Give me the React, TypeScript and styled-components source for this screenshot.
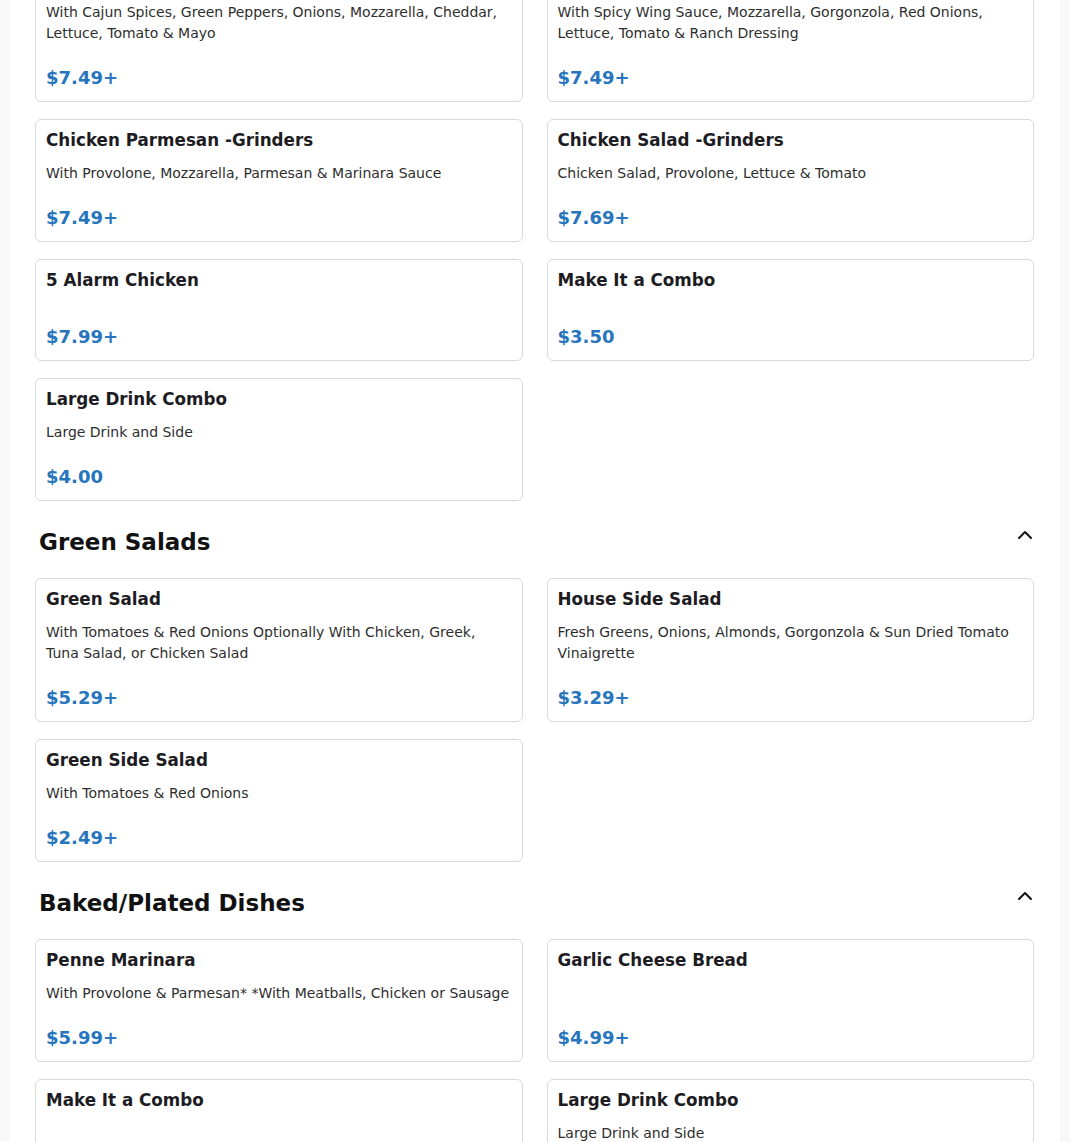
import styled, { createGlobalStyle } from 'styled-components';
import { ChevronUp } from 'lucide-react';

const GlobalStyle = createGlobalStyle`
  body {
    margin: 0;
    background-color: #f8f8f8;
    font-family: "DejaVu Sans", Verdana, sans-serif;
  }
`;

const Page = styled.div`
  max-width: 1050px;
  margin: 0 auto;
  background-color: #ffffff;
  min-height: 100vh;
  overflow: hidden;
`;

// the screenshot is scrolled part way into the menu
const Menu = styled.div`
  padding: 0 26px 0 25px;
  margin-top: -42px;
`;

const Section = styled.section`
  & + & {
    margin-top: 22px;
  }
`;

const SectionHeader = styled.div`
  display: flex;
  justify-content: space-between;
  align-items: flex-start;
  padding-left: 4px;
  margin-bottom: 22px;
`;

const SectionTitle = styled.h2`
  margin: 5px 0 0;
  font-size: 23px;
  line-height: 28px;
  font-weight: bold;
  color: #111111;
`;

const Toggle = styled.button`
  display: flex;
  align-items: center;
  justify-content: center;
  width: 24px;
  height: 24px;
  padding: 0;
  margin-right: -3px;
  border: none;
  background: transparent;
  color: #111111;
  cursor: pointer;
`;

const Grid = styled.div`
  display: grid;
  grid-template-columns: 1fr 1fr;
  column-gap: 24px;
  row-gap: 17px;
`;

const Card = styled.div`
  display: flex;
  flex-direction: column;
  padding: 10px 10px 12px;
  border: 1px solid #d9d9d9;
  border-radius: 6px;
  background-color: #ffffff;
`;

const ItemName = styled.h3`
  margin: 0;
  font-size: 16.75px;
  line-height: 20px;
  font-weight: bold;
  color: #1c1c22;
`;

const ItemDesc = styled.p`
  margin: 13px 0 23px;
  font-size: 14px;
  line-height: 21px;
  color: #2e2e2e;
`;

const Price = styled.div`
  margin-top: auto;
  font-size: 18px;
  line-height: 22px;
  font-weight: bold;
  color: #2675bd;
`;

interface Item {
  name: string;
  desc?: string;
  price: string;
}

interface MenuSection {
  title?: string;
  items: Item[];
}

const sections: MenuSection[] = [
  {
    items: [
      {
        name: 'Cajun Chicken -Grinders',
        desc: 'With Cajun Spices, Green Peppers, Onions, Mozzarella, Cheddar, Lettuce, Tomato & Mayo',
        price: '$7.49+',
      },
      {
        name: 'Buffalo Chicken -Grinders',
        desc: 'With Spicy Wing Sauce, Mozzarella, Gorgonzola, Red Onions, Lettuce, Tomato & Ranch Dressing',
        price: '$7.49+',
      },
      {
        name: 'Chicken Parmesan -Grinders',
        desc: 'With Provolone, Mozzarella, Parmesan & Marinara Sauce',
        price: '$7.49+',
      },
      {
        name: 'Chicken Salad -Grinders',
        desc: 'Chicken Salad, Provolone, Lettuce & Tomato',
        price: '$7.69+',
      },
      { name: '5 Alarm Chicken', price: '$7.99+' },
      { name: 'Make It a Combo', price: '$3.50' },
      { name: 'Large Drink Combo', desc: 'Large Drink and Side', price: '$4.00' },
    ],
  },
  {
    title: 'Green Salads',
    items: [
      {
        name: 'Green Salad',
        desc: 'With Tomatoes & Red Onions Optionally With Chicken, Greek, Tuna Salad, or Chicken Salad',
        price: '$5.29+',
      },
      {
        name: 'House Side Salad',
        desc: 'Fresh Greens, Onions, Almonds, Gorgonzola & Sun Dried Tomato Vinaigrette',
        price: '$3.29+',
      },
      { name: 'Green Side Salad', desc: 'With Tomatoes & Red Onions', price: '$2.49+' },
    ],
  },
  {
    title: 'Baked/Plated Dishes',
    items: [
      {
        name: 'Penne Marinara',
        desc: 'With Provolone & Parmesan* *With Meatballs, Chicken or Sausage',
        price: '$5.99+',
      },
      { name: 'Garlic Cheese Bread', price: '$4.99+' },
      { name: 'Make It a Combo', price: '$3.50' },
      { name: 'Large Drink Combo', desc: 'Large Drink and Side', price: '$4.00' },
    ],
  },
];

function App() {
  return (
    <>
      <GlobalStyle />
      <Page>
        <Menu>
          {sections.map((section, i) => (
            <Section key={i}>
              {section.title && (
                <SectionHeader>
                  <SectionTitle>{section.title}</SectionTitle>
                  <Toggle aria-label="Collapse section">
                    <ChevronUp size={24} strokeWidth={2} />
                  </Toggle>
                </SectionHeader>
              )}
              <Grid>
                {section.items.map((item, j) => (
                  <Card key={j}>
                    <ItemName>{item.name}</ItemName>
                    <ItemDesc>{item.desc}</ItemDesc>
                    <Price>{item.price}</Price>
                  </Card>
                ))}
              </Grid>
            </Section>
          ))}
        </Menu>
      </Page>
    </>
  );
}

export default App;
